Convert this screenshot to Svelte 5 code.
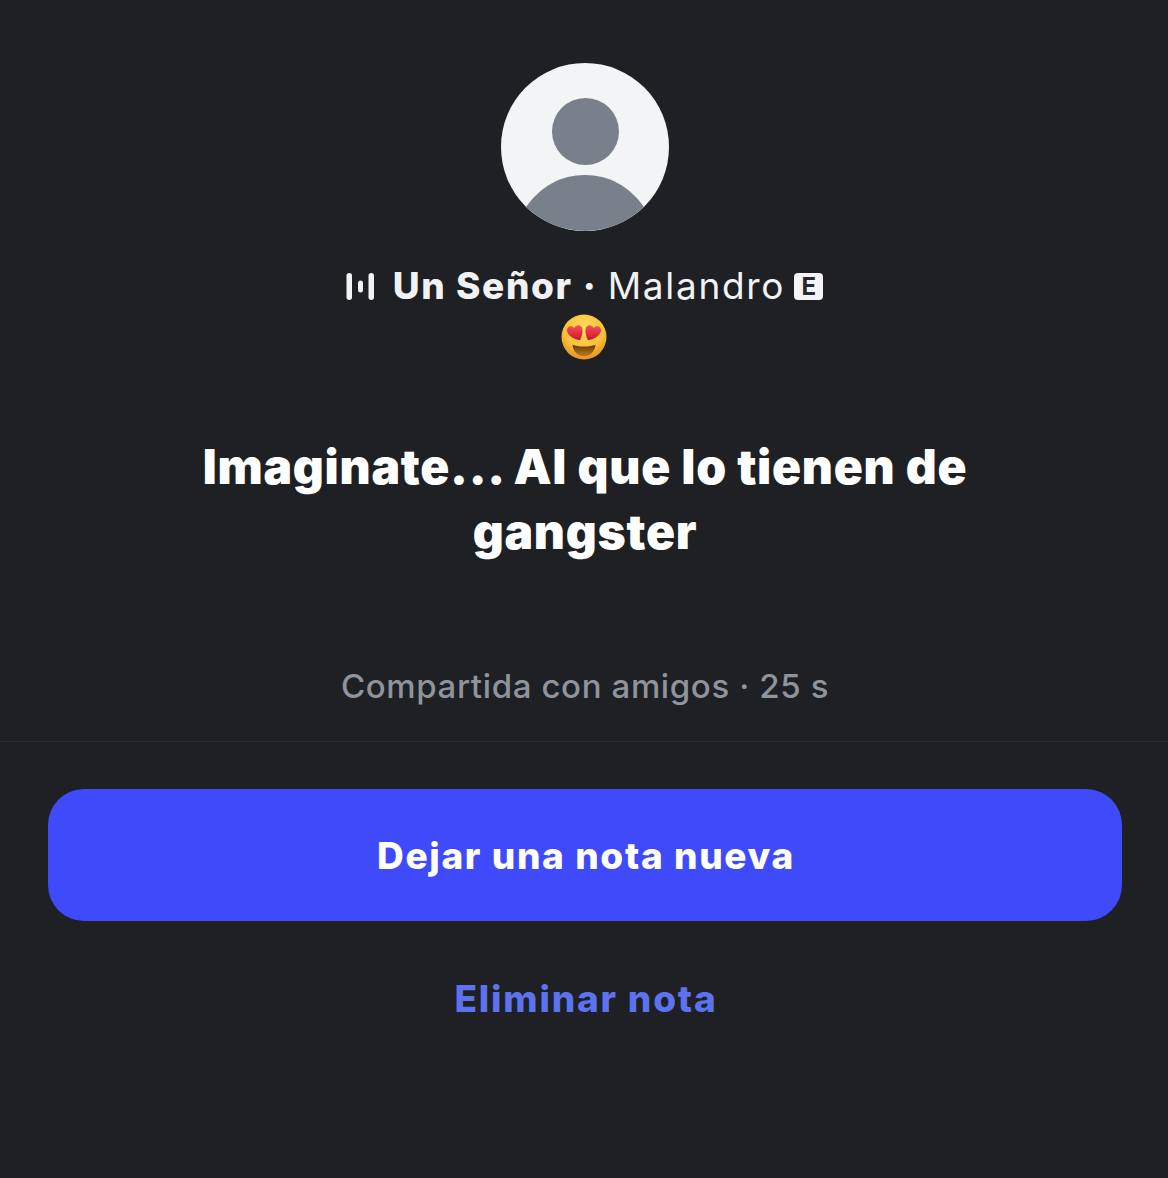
<script>
  const title = 'Imaginate... Al que lo tienen de gangster';
</script>

<main class="sheet">
  <section class="note">
    <svg class="avatar" viewBox="0 0 168 168" aria-hidden="true">
      <circle cx="84" cy="84" r="84" fill="#f3f4f6" />
      <circle cx="84.500" cy="68.500" r="33.500" fill="#7a808b" />
      <path d="M25 144 C40 123 60 112 84 112 C108 112 128 123 143 144 C127 159 106 168 84 168 C62 168 41 159 25 144 Z" fill="#7a808b" />
    </svg>

    <div class="track">
      <svg class="bars" viewBox="0 0 30 28" aria-hidden="true">
        <rect x="1.500" y="1" width="5.500" height="27" rx="2.750" />
        <rect x="13" y="8.500" width="5" height="12" rx="2.500" />
        <rect x="23.500" y="1" width="5.500" height="27" rx="2.750" />
      </svg>
      <span class="song">Un Señor</span>
      <span class="dot">·</span>
      <span class="artist">Malandro</span>
      <span class="explicit">E</span>
    </div>

    <svg class="emoji" viewBox="0 0 48 48" aria-hidden="true">
      <defs>
        <radialGradient id="face" cx="50%" cy="32%" r="72%">
          <stop offset="0" stop-color="#ffdf60" />
          <stop offset="0.62" stop-color="#f9bf38" />
          <stop offset="1" stop-color="#df8a22" />
        </radialGradient>
        <linearGradient id="heart" x1="0" y1="0" x2="0" y2="1">
          <stop offset="0" stop-color="#f4505c" />
          <stop offset="1" stop-color="#cf1427" />
        </linearGradient>
        <linearGradient id="mouth" x1="0" y1="0" x2="0" y2="1">
          <stop offset="0" stop-color="#6b3a0e" />
          <stop offset="1" stop-color="#b97a1e" />
        </linearGradient>
      </defs>
      <circle cx="24" cy="24" r="23.500" fill="url(#face)" />
      <path d="M12 32 C19 34.500 29 34.500 36 32 C35.500 39.500 30 44 24 44 C18 44 12.500 39.500 12 32 Z" fill="url(#mouth)" />
      <path d="M20 27.500 C14 26.500 7 23 6.300 17.500 C5.800 13 10.500 11 14 14.500 C16 10.500 21.500 11 22.300 15.500 C23 19.500 21.500 23.500 20 27.500 Z" fill="url(#heart)" />
      <path d="M28 27.500 C34 26.500 41 23 41.700 17.500 C42.200 13 37.500 11 34 14.500 C32 10.500 26.500 11 25.700 15.500 C25 19.500 26.500 23.500 28 27.500 Z" fill="url(#heart)" />
    </svg>

    <h1>{title}</h1>

    <p class="meta">Compartida con amigos · 25 s</p>
  </section>

  <section class="actions">
    <button class="primary" type="button">Dejar una nota nueva</button>
    <button class="link" type="button">Eliminar nota</button>
  </section>
</main>

<style>
  :global(body) {
    margin: 0;
    background: #1e2024;
  }

  .sheet {
    height: 1178px;
    box-sizing: border-box;
    background: #1e2024;
    color: #f5f6f7;
    font-family: Inter, "Liberation Sans", sans-serif;
    overflow: hidden;
  }

  .note {
    display: flex;
    flex-direction: column;
    align-items: center;
    padding: 63px 0 0 2px;
    height: 742px;
    box-sizing: border-box;
    border-bottom: 1px solid #292b30;
  }

  .avatar {
    width: 168px;
    height: 168px;
    display: block;
  }

  .track {
    display: flex;
    align-items: center;
    margin: 33px 0 0 -2px;
    height: 44px;
    font-size: 37px;
    line-height: 44px;
    color: #f1f2f4;
  }

  .bars {
    width: 30px;
    height: 28px;
    fill: #f1f2f4;
    margin-right: 18px;
  }

  .song {
    font-weight: 800;
    letter-spacing: 1.600px;
  }

  .dot {
    font-weight: 800;
    margin: 0 12px 0 10px;
  }

  .artist {
    font-weight: 400;
    letter-spacing: 1.700px;
  }

  .explicit {
    width: 29px;
    height: 27px;
    margin-left: 9px;
    border-radius: 4px;
    background: #f5f5f7;
    color: #26282c;
    font-size: 24px;
    font-weight: 700;
    line-height: 27px;
    text-align: center;
  }

  .emoji {
    width: 46px;
    height: 46px;
    display: block;
    margin: 6px 0 0 -2px;
  }

  h1 {
    width: 800px;
    margin: 74px 0 0;
    font-size: 48px;
    font-weight: 900;
    line-height: 65px;
    text-align: center;
    color: #fff;
    letter-spacing: 0.72px;
  }

  .meta {
    margin: 102px 0 0;
    font-size: 33px;
    font-weight: 500;
    line-height: 40px;
    color: #8f949c;
    letter-spacing: 0.62px;
  }

  .actions {
    display: flex;
    flex-direction: column;
    align-items: center;
    padding: 47px 46px 0 48px;
  }

  button {
    border: 0;
    font-family: inherit;
    cursor: pointer;
  }

  .primary {
    width: 100%;
    height: 132px;
    padding: 0 0 0 2px;
    border-radius: 36px;
    background: #3f4bfb;
    color: #fff;
    font-size: 37px;
    font-weight: 800;
    letter-spacing: 1.650px;
  }

  .link {
    margin: 55px 0 0 2px;
    padding: 0;
    background: none;
    color: #5c72ee;
    font-size: 37px;
    line-height: 46px;
    font-weight: 800;
    letter-spacing: 1.800px;
  }
</style>
